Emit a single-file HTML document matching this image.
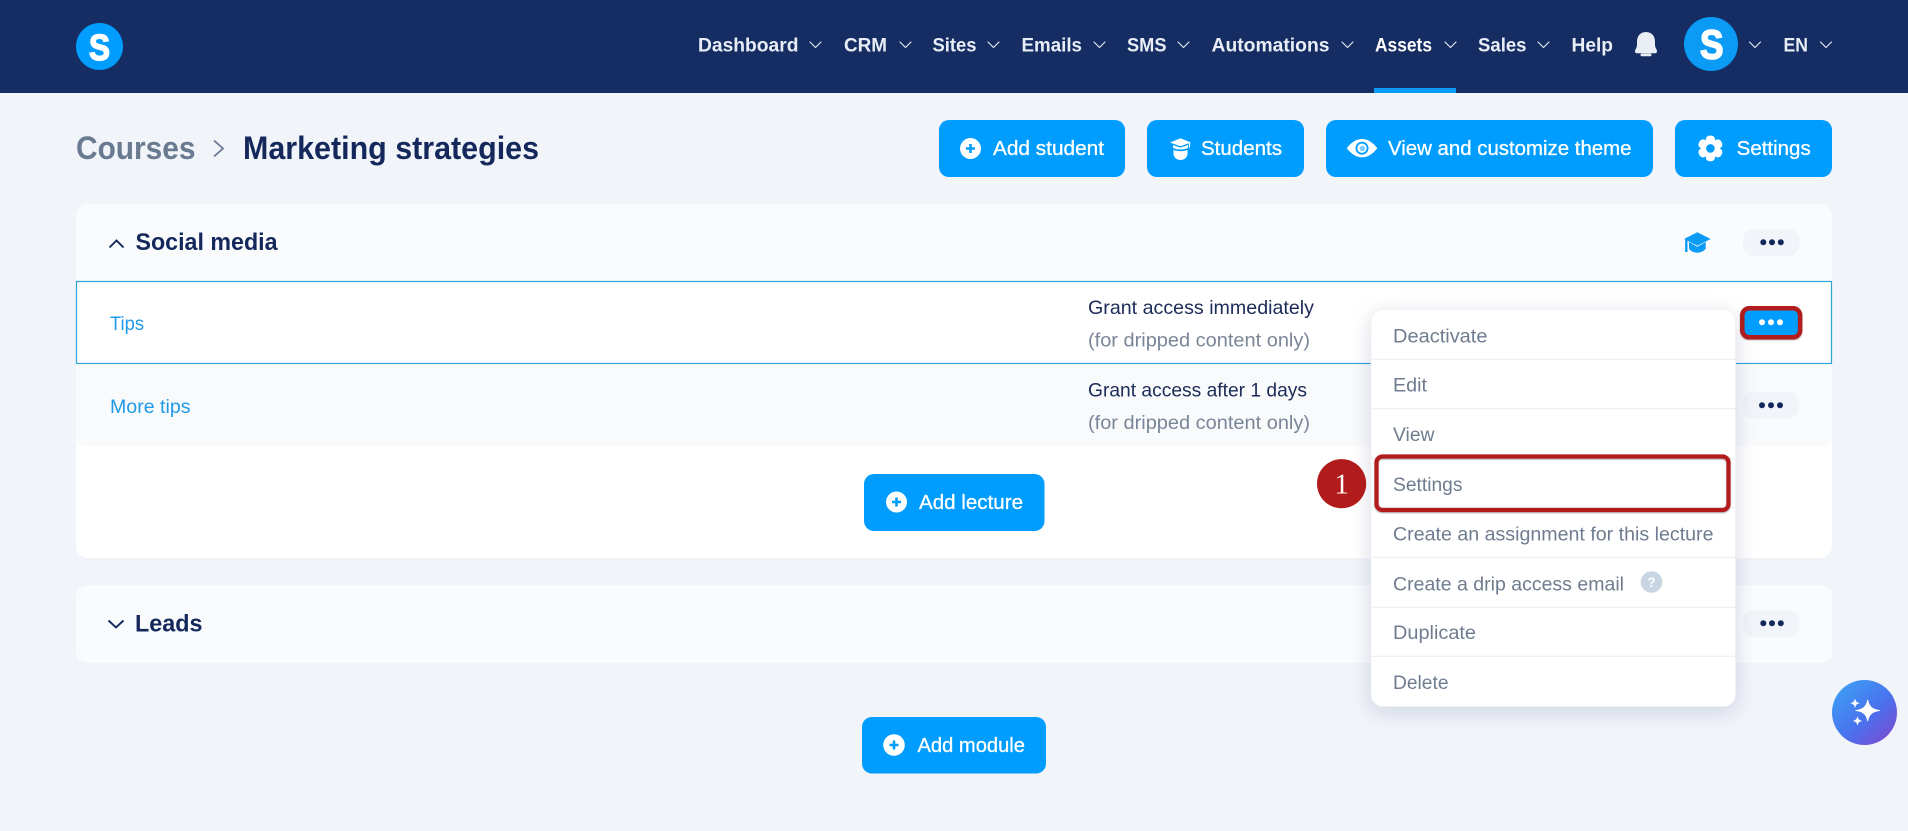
<!DOCTYPE html>
<html lang="en">
<head>
<meta charset="utf-8">
<title>Marketing strategies</title>
<style>
html,body{margin:0;padding:0;background:#f1f4f9;width:1908px;height:831px;overflow:hidden}
svg{display:block;position:absolute;left:0;top:0}
text{font-family:"Liberation Sans",Arial,sans-serif}
.nav{font-size:19px;font-weight:700;fill:#e9eef6}
.btn{font-size:20px;font-weight:400;fill:#fff;stroke:#fff;stroke-width:.3}
.menu{font-size:19.5px;fill:#6f7c8f}
.chev{fill:none;stroke:#dfe6f0;stroke-width:1.2;stroke-linecap:round;stroke-linejoin:round}
.body{font-size:19.5px;fill:#1c2b57}
.sub{font-size:19.5px;fill:#7a8698}
.link{font-size:19.5px;fill:#1f9ae8}
.h{font-size:24px;font-weight:700;fill:#14285c}
</style>
</head>
<body>
<svg xmlns="http://www.w3.org/2000/svg" width="1908" height="831" viewBox="0 0 1908 831">
<defs>
<filter id="ms" x="-20%" y="-20%" width="140%" height="140%"><feDropShadow dx="0" dy="5" stdDeviation="10" flood-color="#1a2a50" flood-opacity=".15"/></filter>
<filter id="rs" x="-5%" y="-10%" width="110%" height="120%"><feDropShadow dx="0" dy="1" stdDeviation=".7" flood-color="#222" flood-opacity=".4"/></filter>
<linearGradient id="ai" x1="0.1" y1="0.1" x2="0.9" y2="0.95"><stop offset="0" stop-color="#3d9df4"/><stop offset=".55" stop-color="#4a72ee"/><stop offset="1" stop-color="#7a4bd0"/></linearGradient>
</defs>

<rect width="1908" height="831" fill="#f1f4f9"/>

<!-- top nav -->
<rect width="1908" height="93" fill="#152d63"/>
<circle cx="99.5" cy="46.5" r="23.5" fill="#009dff"/>
<text x="89" y="60" font-size="36" font-weight="700" fill="#fff" stroke="#fff" stroke-width="1.5" textLength="21" lengthAdjust="spacingAndGlyphs">S</text>

<text class="nav" x="698" y="51.5" textLength="100.5" lengthAdjust="spacingAndGlyphs">Dashboard</text>
<polyline class="chev" points="810,42 815.5,47.5 821,42"/>
<text class="nav" x="844" y="51.5" textLength="43" lengthAdjust="spacingAndGlyphs">CRM</text>
<polyline class="chev" points="900,42 905.5,47.5 911,42"/>
<text class="nav" x="932.5" y="51.5" textLength="44" lengthAdjust="spacingAndGlyphs">Sites</text>
<polyline class="chev" points="988,42 993.5,47.5 999,42"/>
<text class="nav" x="1021.5" y="51.5" textLength="60.5" lengthAdjust="spacingAndGlyphs">Emails</text>
<polyline class="chev" points="1094,42 1099.5,47.5 1105,42"/>
<text class="nav" x="1127" y="51.5" textLength="39.5" lengthAdjust="spacingAndGlyphs">SMS</text>
<polyline class="chev" points="1178,42 1183.5,47.5 1189,42"/>
<text class="nav" x="1211.5" y="51.5" textLength="118" lengthAdjust="spacingAndGlyphs">Automations</text>
<polyline class="chev" points="1342,42 1347.5,47.5 1353,42"/>
<text class="nav" x="1375" y="51.5" textLength="57" lengthAdjust="spacingAndGlyphs" style="fill:#fff">Assets</text>
<polyline class="chev" points="1445,42 1450.5,47.5 1456,42"/>
<rect x="1374" y="88" width="82" height="5" fill="#0b9bf5"/>
<text class="nav" x="1478" y="51.5" textLength="48.5" lengthAdjust="spacingAndGlyphs">Sales</text>
<polyline class="chev" points="1538,42 1543.5,47.5 1549,42"/>
<text class="nav" x="1571.5" y="51.5" textLength="41.5" lengthAdjust="spacingAndGlyphs">Help</text>
<path d="M1646 32c-6 0-9 4.500-9 9.500v3.500c0 3-2 4-2 6.500c0 1.300 1 1.800 2.200 1.800h17.600c1.200 0 2.200-.5 2.200-1.800c0-2.500-2-3.500-2-6.500v-3.500c0-5-3-9.500-9-9.500z" fill="#eaeff6"/>
<rect x="1640.500" y="53.500" width="11" height="2.800" rx="1.400" fill="#eaeff6"/>
<circle cx="1711" cy="44" r="27" fill="#0b9bf5"/>
<text x="1700" y="58.500" font-size="41" font-weight="700" fill="#fff" stroke="#fff" stroke-width="1.600" textLength="23.500" lengthAdjust="spacingAndGlyphs">S</text>
<polyline class="chev" points="1749.500,42 1755,47.500 1760.500,42"/>
<text class="nav" x="1783.500" y="51.500" textLength="24.500" lengthAdjust="spacingAndGlyphs">EN</text>
<polyline class="chev" points="1820.500,42 1826,47.500 1831.500,42"/>

<!-- breadcrumb -->
<text x="76" y="159" font-size="32" font-weight="700" fill="#697a91" textLength="119.500" lengthAdjust="spacingAndGlyphs">Courses</text>
<polyline points="214,140.500 223,148.500 214,156.500" fill="none" stroke="#697a91" stroke-width="1.800"/>
<text x="243" y="159" font-size="32" font-weight="700" fill="#14285c" textLength="296" lengthAdjust="spacingAndGlyphs">Marketing strategies</text>

<!-- header buttons -->
<rect x="939" y="120" width="186" height="57" rx="10" fill="#009dff"/>
<circle cx="970.500" cy="148.500" r="10.500" fill="#fff"/>
<path d="M970.500 144v9M966 148.500h9" stroke="#009dff" stroke-width="2.600"/>
<text class="btn" x="993" y="155" textLength="111" lengthAdjust="spacingAndGlyphs">Add student</text>

<rect x="1147" y="120" width="157" height="57" rx="10" fill="#009dff"/>
<path d="M1170 142.500l10.500-4.300l10.500 4.300l-10.500 3.700z" fill="#fff"/>
<path d="M1173 145v3c2 1 4.500 1.400 7.500 1.400s5.500-.4 7.500-1.400v-3l-7.500 2.600z" fill="#fff"/>
<path d="M1173.500 150c2 .8 4.500 1.200 7 1.200s5-.4 7-1.200v3.500c0 3.600-3 6.500-7 6.500s-7-2.900-7-6.500z" fill="#fff"/>
<path d="M1189.500 143v4.500" stroke="#fff" stroke-width="1.200"/>
<text class="btn" x="1201" y="155" textLength="81" lengthAdjust="spacingAndGlyphs">Students</text>

<rect x="1326" y="120" width="327" height="57" rx="10" fill="#009dff"/>
<path d="M1346.700 148.200C1352 141.500 1357 139 1362 139s10 2.500 15.300 9.200C1372 154.800 1367 157.300 1362 157.300s-10-2.500-15.300-9.100z" fill="#fff"/>
<circle cx="1362" cy="148.200" r="6.500" fill="#009dff"/>
<circle cx="1362" cy="148.200" r="4.700" fill="#fff"/>
<circle cx="1362.500" cy="148.500" r="2.800" fill="#009dff" opacity=".5"/>
<text class="btn" x="1388" y="155" textLength="243.500" lengthAdjust="spacingAndGlyphs">View and customize theme</text>

<rect x="1675" y="120" width="157" height="57" rx="10" fill="#009dff"/>
<g fill="#fff" transform="translate(1710.400 148.400)">
<circle r="9.200"/>
<rect x="-4.600" y="-12.800" width="9.200" height="9" rx="3.800"/>
<rect x="-4.600" y="-12.800" width="9.200" height="9" rx="3.800" transform="rotate(60)"/>
<rect x="-4.600" y="-12.800" width="9.200" height="9" rx="3.800" transform="rotate(120)"/>
<rect x="-4.600" y="-12.800" width="9.200" height="9" rx="3.800" transform="rotate(180)"/>
<rect x="-4.600" y="-12.800" width="9.200" height="9" rx="3.800" transform="rotate(240)"/>
<rect x="-4.600" y="-12.800" width="9.200" height="9" rx="3.800" transform="rotate(300)"/>
<circle r="4.300" fill="#009dff"/>
</g>
<text class="btn" x="1736.700" y="155" textLength="74" lengthAdjust="spacingAndGlyphs">Settings</text>

<!-- social media card -->
<rect x="76" y="204" width="1756" height="354" rx="12" fill="#fff"/>
<path d="M76 281V216a12 12 0 0 1 12-12H1820a12 12 0 0 1 12 12V281z" fill="#f9fbfd"/>
<polyline points="109.500,247.500 116.500,240.500 123.500,247.500" fill="none" stroke="#14285c" stroke-width="1.900"/>
<text class="h" x="135.500" y="250" textLength="142" lengthAdjust="spacingAndGlyphs">Social media</text>
<path d="M1684 239l13.300-6.700l13.400 6.700l-13.400 6.700z" fill="#0b9bf5"/>
<path d="M1689 242v6.500c1.600 2.800 5 4.200 8.300 4.200s6.700-1.400 8.400-4.200v-6.500l-8.400 4.800z" fill="#0b9bf5"/>
<path d="M1686.300 240v12" stroke="#0b9bf5" stroke-width="2.400"/>
<rect x="1743" y="229" width="56.500" height="27" rx="11" fill="#f1f4f9"/>
<circle cx="1763.300" cy="242.300" r="3" fill="#14285c"/><circle cx="1772" cy="242.300" r="3" fill="#14285c"/><circle cx="1780.800" cy="242.300" r="3" fill="#14285c"/>

<!-- row 1 -->
<rect x="76.500" y="281.500" width="1755" height="82" fill="#fff" stroke="#2ea3d8" stroke-width="1.200"/>
<text class="link" x="110" y="330" textLength="34" lengthAdjust="spacingAndGlyphs">Tips</text>
<text class="body" x="1088" y="314" textLength="226" lengthAdjust="spacingAndGlyphs">Grant access immediately</text>
<text class="sub" x="1088" y="346.500" textLength="222" lengthAdjust="spacingAndGlyphs">(for dripped content only)</text>

<!-- row 2 -->
<path d="M76 364.200H1832V435a12 12 0 0 1-12 12H88a12 12 0 0 1-12-12z" fill="#f8fafc"/>
<text class="link" x="110" y="413" textLength="80.500" lengthAdjust="spacingAndGlyphs">More tips</text>
<text class="body" x="1088" y="396.500" textLength="219" lengthAdjust="spacingAndGlyphs">Grant access after 1 days</text>
<text class="sub" x="1088" y="429" textLength="222" lengthAdjust="spacingAndGlyphs">(for dripped content only)</text>
<rect x="1742" y="392" width="56.500" height="27" rx="11" fill="#f1f4f9"/>
<circle cx="1762" cy="405.300" r="3" fill="#14285c"/><circle cx="1771" cy="405.300" r="3" fill="#14285c"/><circle cx="1780" cy="405.300" r="3" fill="#14285c"/>

<!-- add lecture -->
<rect x="864" y="474" width="180.500" height="57" rx="10" fill="#009dff"/>
<circle cx="896.500" cy="502" r="10.500" fill="#fff"/>
<path d="M896.500 497.500v9M892 502h9" stroke="#009dff" stroke-width="2.600"/>
<text class="btn" x="919" y="509" textLength="104" lengthAdjust="spacingAndGlyphs">Add lecture</text>

<!-- leads card -->
<rect x="76" y="585" width="1756" height="78" rx="12" fill="#f9fbfd"/>
<polyline points="108.500,620.500 116,627.500 123.500,620.500" fill="none" stroke="#14285c" stroke-width="1.900"/>
<text class="h" x="135" y="631.500" textLength="67.500" lengthAdjust="spacingAndGlyphs">Leads</text>
<rect x="1743" y="610" width="56.500" height="27" rx="11" fill="#f1f4f9"/>
<circle cx="1763.300" cy="623.300" r="3" fill="#14285c"/><circle cx="1772" cy="623.300" r="3" fill="#14285c"/><circle cx="1780.800" cy="623.300" r="3" fill="#14285c"/>

<!-- add module -->
<rect x="862" y="717" width="184" height="56.500" rx="10" fill="#009dff"/>
<circle cx="894" cy="745" r="10.800" fill="#fff"/>
<path d="M894 740.500v9M889.500 745h9" stroke="#009dff" stroke-width="2.600"/>
<text class="btn" x="917.500" y="752" textLength="107.500" lengthAdjust="spacingAndGlyphs">Add module</text>

<!-- active dots button -->
<rect x="1742.300" y="308.300" width="57.800" height="29" rx="7" fill="#009dff" stroke="#b21b1b" stroke-width="4.500" filter="url(#rs)"/>
<circle cx="1762" cy="322.300" r="3" fill="#fff"/><circle cx="1771" cy="322.300" r="3" fill="#fff"/><circle cx="1780" cy="322.300" r="3" fill="#fff"/>

<!-- dropdown -->
<rect x="1371" y="309.500" width="364.500" height="397" rx="12" fill="#fff" stroke="#eef1f5" stroke-width=".8" filter="url(#ms)"/>
<g stroke="#ebeef2" stroke-width="1.200">
<path d="M1371 359.300h364.500M1371 408.700h364.500M1371 458.300h364.500M1371 507.300h364.500M1371 557.300h364.500M1371 607.300h364.500M1371 656.300h364.500"/>
</g>
<text class="menu" x="1393" y="342.500" textLength="94.500" lengthAdjust="spacingAndGlyphs">Deactivate</text>
<text class="menu" x="1393" y="391.500" textLength="34" lengthAdjust="spacingAndGlyphs">Edit</text>
<text class="menu" x="1393" y="441" textLength="41.500" lengthAdjust="spacingAndGlyphs">View</text>
<text class="menu" x="1393" y="491" textLength="69.500" lengthAdjust="spacingAndGlyphs">Settings</text>
<text class="menu" x="1393" y="540.500" textLength="320.500" lengthAdjust="spacingAndGlyphs">Create an assignment for this lecture</text>
<text class="menu" x="1393" y="590.500" textLength="231" lengthAdjust="spacingAndGlyphs">Create a drip access email</text>
<circle cx="1651.500" cy="582" r="10.800" fill="#c9d5e3"/>
<text x="1647.500" y="587" font-size="14" font-weight="700" fill="#fff" textLength="8" lengthAdjust="spacingAndGlyphs">?</text>
<text class="menu" x="1393" y="639" textLength="83" lengthAdjust="spacingAndGlyphs">Duplicate</text>
<text class="menu" x="1393" y="689" textLength="55.500" lengthAdjust="spacingAndGlyphs">Delete</text>

<!-- annotation -->
<rect x="1376.500" y="456.500" width="352" height="53.500" rx="6" fill="none" stroke="#b21b1b" stroke-width="4.200" filter="url(#rs)"/>
<circle cx="1341.600" cy="483.700" r="24.600" fill="#b21b1b"/>
<text x="1341.600" y="493.500" text-anchor="middle" font-size="29" fill="#fff" style="font-family:'Liberation Serif',serif">1</text>

<!-- AI button -->
<circle cx="1864.500" cy="712.500" r="32.500" fill="url(#ai)"/>
<path d="M1867.700 700c1.200 6.500 4.500 9.500 12 10.500c-7.500 1-10.800 4-12 10.500c-1.200-6.500-4.500-9.500-12-10.500c7.500-1 10.800-4 12-10.500z" fill="#fff" stroke="#fff" stroke-width=".8" stroke-linejoin="round"/>
<path d="M1855 699c.6 2.600 1.500 3.500 4.200 4.200c-2.700.7-3.600 1.600-4.200 4.200c-.6-2.600-1.500-3.500-4.200-4.200c2.700-.7 3.600-1.600 4.200-4.200z" fill="#fff" stroke="#fff" stroke-width=".5"/>
<path d="M1857.500 716.700c.6 2.600 1.500 3.500 4.200 4.200c-2.700.7-3.600 1.600-4.200 4.200c-.6-2.600-1.500-3.500-4.200-4.200c2.700-.7 3.600-1.600 4.200-4.200z" fill="#fff" stroke="#fff" stroke-width=".5"/>
</svg>
</body>
</html>
